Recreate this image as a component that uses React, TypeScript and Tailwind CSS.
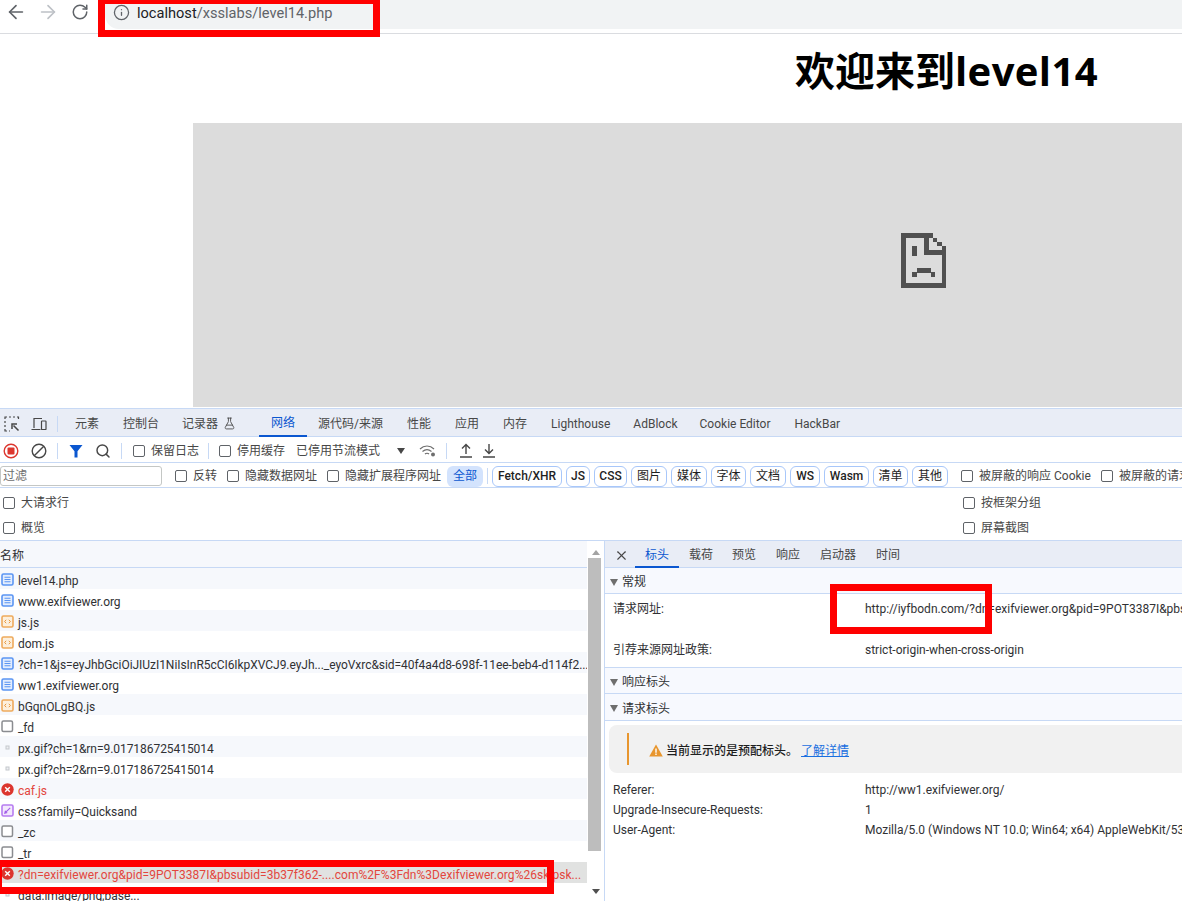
import React from "react";
import { ArrowLeft, ArrowRight, RotateCw, Info, FlaskConical, Search, X } from "lucide-react";

const FONT = "font-['Roboto','Noto_Sans_CJK_SC',sans-serif]";

function Check({ label, className = "" }: { label: string; className?: string }) {
    return (
        <label className={`flex shrink-0 items-center gap-[6px] whitespace-nowrap ${className}`}>
            <span className="h-3 w-3 shrink-0 rounded-[2px] border border-[#5f6368] bg-white" />
            <span>{label}</span>
        </label>
    );
}

function Sep({ className = "" }: { className?: string }) {
    return <div className={`h-4 w-px shrink-0 bg-[#c7d9f5] ${className}`} />;
}

function Chip({ label, className = "" }: { label: string; className?: string }) {
    return (
        <div className={`flex h-[21px] shrink-0 items-center justify-center rounded-[6px] border border-[#a8c7fa] text-[#1f1f1f] ${className}`}>
            {label}
        </div>
    );
}

function FileIcon({ kind }: { kind: string }) {
    if (kind === "doc") {
        return (
            <svg width="13" height="13" viewBox="0 0 13 13" className="mt-[1px] shrink-0">
                <rect x="1" y="1" width="11" height="11" rx="1.5" fill="#e3edfd" stroke="#5b95f3" strokeWidth="1.6" />
                <path d="M3.5 4.3h6M3.5 6.5h6M3.5 8.7h6" stroke="#5b95f3" strokeWidth="1.1" />
            </svg>
        );
    }
    if (kind === "js") {
        return (
            <svg width="13" height="13" viewBox="0 0 13 13" className="mt-[1px] shrink-0">
                <rect x="1" y="1" width="11" height="11" rx="1.5" fill="#fdf0dd" stroke="#eeaa5c" strokeWidth="1.6" />
                <path d="M5.2 4.8 3.6 6.5l1.6 1.7M7.8 4.8l1.6 1.7-1.6 1.7" fill="none" stroke="#e8963c" strokeWidth="1" />
            </svg>
        );
    }
    if (kind === "css") {
        return (
            <svg width="13" height="13" viewBox="0 0 13 13" className="mt-[1px] shrink-0">
                <rect x="1" y="1" width="11" height="11" rx="1.5" fill="#f3e8fd" stroke="#b77cf0" strokeWidth="1.6" />
                <path d="M3.8 9.2 9.2 3.8M3.8 9.2l1.8-.5-1.3-1.3z" fill="none" stroke="#a35ee8" strokeWidth="1.1" />
            </svg>
        );
    }
    if (kind === "err") {
        return (
            <svg width="13" height="13" viewBox="0 0 13 13" className="mt-[1px] shrink-0">
                <circle cx="6.5" cy="6.5" r="6.2" fill="#dc362e" />
                <path d="M4.2 4.2l4.6 4.6M8.8 4.2 4.2 8.8" stroke="#fff" strokeWidth="1.4" />
            </svg>
        );
    }
    if (kind === "img") {
        return (
            <svg width="13" height="13" viewBox="0 0 13 13" className="mt-[1px] shrink-0">
                <rect x="5" y="5" width="3" height="3" fill="#eef0f3" stroke="#c4c7cc" strokeWidth="1" />
            </svg>
        );
    }
    return (
        <svg width="13" height="13" viewBox="0 0 13 13" className="mt-[1px] shrink-0">
            <rect x="1" y="1" width="10.5" height="10.5" rx="1.5" fill="#fff" stroke="#8a8c90" strokeWidth="1.5" />
        </svg>
    );
}

const requests = [
    { icon: "doc", name: "level14.php" },
    { icon: "doc", name: "www.exifviewer.org" },
    { icon: "js", name: "js.js" },
    { icon: "js", name: "dom.js" },
    { icon: "doc", name: "?ch=1&js=eyJhbGciOiJIUzI1NiIsInR5cCI6IkpXVCJ9.eyJh..._eyoVxrc&sid=40f4a4d8-698f-11ee-beb4-d114f2..." },
    { icon: "doc", name: "ww1.exifviewer.org" },
    { icon: "js", name: "bGqnOLgBQ.js" },
    { icon: "blank", name: "_fd" },
    { icon: "img", name: "px.gif?ch=1&rn=9.017186725415014" },
    { icon: "img", name: "px.gif?ch=2&rn=9.017186725415014" },
    { icon: "err", name: "caf.js", error: true },
    { icon: "css", name: "css?family=Quicksand" },
    { icon: "blank", name: "_zc" },
    { icon: "blank", name: "_tr" },
    { icon: "err", name: "?dn=exifviewer.org&pid=9POT3387I&pbsubid=3b37f362-....com%2F%3Fdn%3Dexifviewer.org%26skipsk...", error: true, selected: true },
    { icon: "img", name: "data:image/png;base..." },
];

function SectionHead({ title, className = "" }: { title: string; className?: string }) {
    return (
        <div className={`flex items-center bg-[#f7f9fe] pl-[5px] pt-[3px] text-[#303134] ${className}`}>
            <span className="mr-[3px] h-0 w-0 border-x-[4px] border-t-[7px] border-x-transparent border-t-[#6e6e6e]" />
            <span className="ml-[1px]">{title}</span>
        </div>
    );
}

function HeaderRow({ name, value, className = "" }: { name: string; value: string; className?: string }) {
    return (
        <div className={`flex whitespace-nowrap text-[#303134] ${className}`}>
            <div className="w-[260px] shrink-0 pl-[8px]">{name}</div>
            <div>{value}</div>
        </div>
    );
}

function App() {
    return (
        <div className={`relative h-[901px] w-[1182px] overflow-hidden bg-white text-[12px] leading-[16px] text-[#3c4043] ${FONT}`}>
            {/* browser chrome */}
            <div className="flex h-[34px] border-b border-[#dadce0] bg-white">
                <div className="flex h-[24px] w-[105px] shrink-0 items-center pl-[5px]">
                    <ArrowLeft size={22} strokeWidth={1.8} className="text-[#5f6368]" />
                    <ArrowRight size={22} strokeWidth={1.8} className="ml-[10px] text-[#bdc1c6]" />
                    <RotateCw size={18} strokeWidth={2} className="ml-[12px] text-[#5f6368]" />
                </div>
                <div className="flex h-[29px] flex-1 items-start rounded-bl-[14px] bg-[#f1f3f4] pl-[8px] pt-[4px]">
                    <Info size={17} strokeWidth={1.8} className="text-[#5f6368]" />
                    <div className="ml-[7px] text-[14.6px] leading-[18px] text-[#5f6368]">
                        <span className="text-[#202124]">localhost</span>/xsslabs/level14.php
                    </div>
                </div>
            </div>

            {/* page */}
            <div className="h-[374px] overflow-hidden bg-white">
                <h1 className="ml-[795px] mt-[10px] h-[79px] whitespace-nowrap font-['Open_Sans','Noto_Sans_CJK_SC',sans-serif] text-[40px] font-bold leading-[54px] text-black">
                    欢迎来到<span className="tracking-[0.4px]">level14</span>
                </h1>
                <div className="ml-[193px] flex h-[284px] w-[1460px] items-center justify-center bg-[#dcdcdc] pb-[10px]">
                    <svg width="45" height="55" viewBox="0 0 45 55" shapeRendering="crispEdges" fill="#505050">
                        <path d="M0 0h32v5h-27v45h36v-28h-18v-17h5v12h13v-4h4v42h-45z" />
                        <path d="M32 5h4v4h-4zM36 9h5v4h-5zM11 13h5v10h-5zM16 35h14v5h-14zM11 39h5v5h-5zM30 39h4v5h-4z" />
                    </svg>
                </div>
            </div>

            {/* devtools */}
            <div className="flex h-[493px] flex-col border-t border-[#c7d9f5]">
                <div className="flex h-[28px] shrink-0 items-center border-b border-[#c7d9f5] bg-[#e9edf6] pt-[2px]">
                    <svg width="16" height="16" viewBox="0 0 16 16" className="ml-[4px] shrink-0" fill="none" stroke="#474747" strokeWidth="1.2">
                        <path d="M1 3V1h2M5 1h2M9 1h2M13 1h1.5v2M1 5v2M1 9v2M1 13v2h2M5 15h1" />
                        <path d="M14.5 14.5 9.5 9.5M8 13V8h5" strokeWidth="1.5" />
                    </svg>
                    <svg width="16" height="14" viewBox="0 0 16 14" className="ml-[11px] shrink-0" fill="none" stroke="#474747" strokeWidth="1.2">
                        <path d="M3 11V1.5h8M0.5 12.5h9" />
                        <rect x="10.5" y="4" width="4.5" height="8.5" rx="0.6" />
                    </svg>
                    <Sep className="ml-[10px]" />
                    <div className="ml-[5px] flex h-full items-center text-[#474747]">
                        <div className="px-[12px]">元素</div>
                        <div className="pl-[12px] pr-[11px]">控制台</div>
                        <div className="flex items-center px-[12px]">
                            记录器
                            <FlaskConical size={13} strokeWidth={1.6} className="ml-[5px]" />
                        </div>
                        <div className="-mb-px ml-[11px] flex items-center self-stretch border-b-2 border-[#0b57d0] px-[12px] text-[#0b57d0]">网络</div>
                        <div className="pl-[11px] pr-[12px]">源代码/来源</div>
                        <div className="px-[12px]">性能</div>
                        <div className="px-[12px]">应用</div>
                        <div className="px-[12px]">内存</div>
                        <div className="pl-[12px] pr-[11px]">Lighthouse</div>
                        <div className="pl-[12px] pr-[10px]">AdBlock</div>
                        <div className="px-[12px]">Cookie Editor</div>
                        <div className="px-[12px]">HackBar</div>
                    </div>
                </div>

                <div className="flex h-[26px] shrink-0 items-center border-b border-[#c7d9f5] pt-[2px] text-[#474747]">
                    <svg width="16" height="16" viewBox="0 0 16 16" className="ml-[3px] shrink-0">
                        <circle cx="8" cy="8" r="6.8" fill="none" stroke="#dc362e" strokeWidth="1.4" />
                        <rect x="4.5" y="4.5" width="7" height="7" rx="1" fill="#dc362e" />
                    </svg>
                    <svg width="16" height="16" viewBox="0 0 16 16" className="ml-[12px] shrink-0" fill="none" stroke="#474747" strokeWidth="1.4">
                        <circle cx="8" cy="8" r="6.8" />
                        <path d="M3.2 12.8 12.8 3.2" />
                    </svg>
                    <Sep className="ml-[10px]" />
                    <svg width="14" height="14" viewBox="0 0 14 14" className="ml-[11px] shrink-0" fill="#0b57d0">
                        <path d="M0.5 1h13l-5 6.2V13.5h-3V7.2z" />
                    </svg>
                    <Search size={16} strokeWidth={2.2} className="ml-[12px] text-[#474747]" />
                    <Sep className="ml-[10px]" />
                    <Check label="保留日志" className="ml-[11px]" />
                    <Sep className="ml-[9px]" />
                    <Check label="停用缓存" className="ml-[10px]" />
                    <div className="ml-[11px] whitespace-nowrap">已停用节流模式</div>
                    <span className="ml-[17px] h-0 w-0 border-x-[4px] border-t-[6px] border-x-transparent border-t-[#474747]" />
                    <svg width="18" height="14" viewBox="0 0 18 14" className="ml-[14px] shrink-0" fill="none" stroke="#6e6e6e" strokeWidth="1.2">
                        <path d="M1 5c4-4 10-4 14 0M3.5 7.5c3-2.5 6-2.5 9 0M6 10c1-1 3-1 4 0" />
                        <circle cx="14" cy="10.5" r="2" fill="#6e6e6e" stroke="none" />
                    </svg>
                    <Sep className="ml-[9px]" />
                    <svg width="14" height="15" viewBox="0 0 14 15" className="ml-[12px] shrink-0" fill="none" stroke="#474747" strokeWidth="1.4">
                        <path d="M7 11V2M3 5.5 7 1.5l4 4M1 14h12" />
                    </svg>
                    <svg width="14" height="15" viewBox="0 0 14 15" className="ml-[9px] shrink-0" fill="none" stroke="#474747" strokeWidth="1.4">
                        <path d="M7 1v9M3 6.5l4 4 4-4M1 14h12" />
                    </svg>
                </div>

                <div className="flex h-[25px] shrink-0 items-center overflow-hidden border-b border-[#c7d9f5] pt-[2px] text-[#474747]">
                    <div className="flex h-[20px] w-[162px] shrink-0 items-center rounded-[3px] border border-[#c4c7c5] pl-[2px] text-[#6e6e6e]">过滤</div>
                    <Check label="反转" className="ml-[13px]" />
                    <Check label="隐藏数据网址" className="ml-[10px]" />
                    <Check label="隐藏扩展程序网址" className="ml-[10px]" />
                    <div className="ml-[6px] flex h-[21px] w-[36px] shrink-0 items-center justify-center rounded-[6px] bg-[#d3e3fd] text-[#0b57d0]">全部</div>
                    <Sep className="ml-[4px]" />
                    <div className="ml-[4px] flex shrink-0 gap-[4px]">
                        <Chip label="Fetch/XHR" className="w-[70px] font-medium" />
                        <Chip label="JS" className="w-[24px] font-medium" />
                        <Chip label="CSS" className="w-[33px] font-medium" />
                        <Chip label="图片" className="w-[36px]" />
                        <Chip label="媒体" className="w-[36px]" />
                        <Chip label="字体" className="w-[35px]" />
                        <Chip label="文档" className="w-[36px]" />
                        <Chip label="WS" className="w-[30px] font-medium" />
                        <Chip label="Wasm" className="w-[45px] font-medium" />
                        <Chip label="清单" className="w-[35px]" />
                        <Chip label="其他" className="w-[36px]" />
                    </div>
                    <Check label="被屏蔽的响应 Cookie" className="ml-[13px]" />
                    <Check label="被屏蔽的请求 Cookie" className="ml-[10px]" />
                </div>

                <div className="grid h-[53px] shrink-0 grid-cols-[963px_1fr] grid-rows-2 items-center border-b border-[#c7d9f5] pl-[3px] pt-[3px] text-[#474747]">
                    <Check label="大请求行" />
                    <Check label="按框架分组" className="ml-[-3px]" />
                    <Check label="概览" />
                    <Check label="屏幕截图" className="ml-[-3px]" />
                </div>

                <div className="flex min-h-0 flex-1">
                    <div className="flex w-[605px] shrink-0 border-r border-[#c7d9f5]">
                        <div className="min-w-0 flex-1">
                            <div className="flex h-[27px] items-center border-b border-[#c7d9f5] bg-[#f6f8fc] pt-[3px] text-[#303134]">名称</div>
                            {requests.map((r, i) => (
                                <div
                                    key={i}
                                    className={`flex h-[21px] items-center gap-[4px] whitespace-nowrap pl-[1px] ${
                                        r.selected ? "bg-[#e1e2e1] tracking-[0.05px]" : i % 2 === 0 ? "bg-[#f6f8fc] tracking-[-0.05px]" : "bg-white tracking-[-0.05px]"
                                    } ${r.error ? "text-[#e3463d]" : "text-[#303134]"}`}
                                >
                                    <FileIcon kind={r.icon} />
                                    <span className="pt-[4px]">{r.name}</span>
                                </div>
                            ))}
                        </div>
                        <div className="flex w-[17px] shrink-0 flex-col items-center bg-white">
                            <span className="mt-[9px] h-0 w-0 border-x-[4px] border-b-[5px] border-x-transparent border-b-[#a3a3a3]" />
                            <div className="ml-[-2px] mt-[3px] h-[293px] w-[13px] bg-[#bdbdbd]" />
                            <span className="mt-[38px] h-0 w-0 border-x-[4px] border-t-[5px] border-x-transparent border-t-[#505050]" />
                        </div>
                    </div>

                    <div className="min-w-0 flex-1">
                        <div className="flex h-[27px] items-center border-b border-[#c7d9f5] bg-[#e9edf6] pt-[2px] text-[#474747]">
                            <X size={15} strokeWidth={1.8} className="ml-[9px] shrink-0" />
                            <div className="-mb-px ml-[6px] flex w-[44px] items-center justify-center self-stretch border-b-2 border-[#0b57d0] text-[#0b57d0]">标头</div>
                            <div className="ml-[10px]">载荷</div>
                            <div className="ml-[19px]">预览</div>
                            <div className="ml-[20px]">响应</div>
                            <div className="ml-[20px]">启动器</div>
                            <div className="ml-[20px]">时间</div>
                        </div>
                        <SectionHead title="常规" className="h-[26px] border-b border-[#c7d9f5]" />
                        <div className="h-[73px] pt-[6px]">
                            <HeaderRow name="请求网址:" value="http://iyfbodn.com/?dn=exifviewer.org&pid=9POT3387I&pbsubid=3b37f362" className="h-[42px] pt-[1px]" />
                            <HeaderRow name="引荐来源网址政策:" value="strict-origin-when-cross-origin" />
                        </div>
                        <SectionHead title="响应标头" className="h-[27px] border-y border-[#c7d9f5]" />
                        <SectionHead title="请求标头" className="h-[27px] border-b border-[#c7d9f5]" />
                        <div className="ml-[4px] mt-[4px] flex h-[48px] w-[700px] items-center rounded-[8px] bg-[#f1f1f1] pl-[18px]">
                            <div className="h-[32px] w-[2px] bg-[#e8962e]" />
                            <svg width="14" height="13" viewBox="0 0 14 13" className="ml-[20px] mt-[3px] shrink-0">
                                <path d="M7 0.5 13.8 12.5H0.2z" fill="#e8962e" />
                                <path d="M6.3 4.5h1.4v4.2H6.3zM6.3 9.5h1.4v1.4H6.3z" fill="#fff" />
                            </svg>
                            <div className="ml-[3px] whitespace-nowrap pt-[4px] font-medium text-[#1f1f1f]">当前显示的是预配标头。</div>
                            <div className="ml-[3px] whitespace-nowrap pt-[4px] text-[#1a6fe0] underline">了解详情</div>
                        </div>
                        <div className="mt-[9px] flex flex-col gap-[4px]">
                            <HeaderRow name="Referer:" value="http://ww1.exifviewer.org/" />
                            <HeaderRow name="Upgrade-Insecure-Requests:" value="1" />
                            <HeaderRow name="User-Agent:" value="Mozilla/5.0 (Windows NT 10.0; Win64; x64) AppleWebKit/537.36" />
                        </div>
                    </div>
                </div>
            </div>

            {/* red annotation boxes drawn over the screenshot */}
            <div className="absolute left-[98px] top-[-3px] h-[40px] w-[282px] border-[7px] border-[#ff0000]" />
            <div className="absolute left-[830px] top-[584px] h-[50px] w-[162px] border-[7px] border-[#ff0000]" />
            <div className="absolute left-[-5px] top-[860px] h-[34px] w-[559px] border-[7px] border-[#ff0000]" />
        </div>
    );
}

export default App;
